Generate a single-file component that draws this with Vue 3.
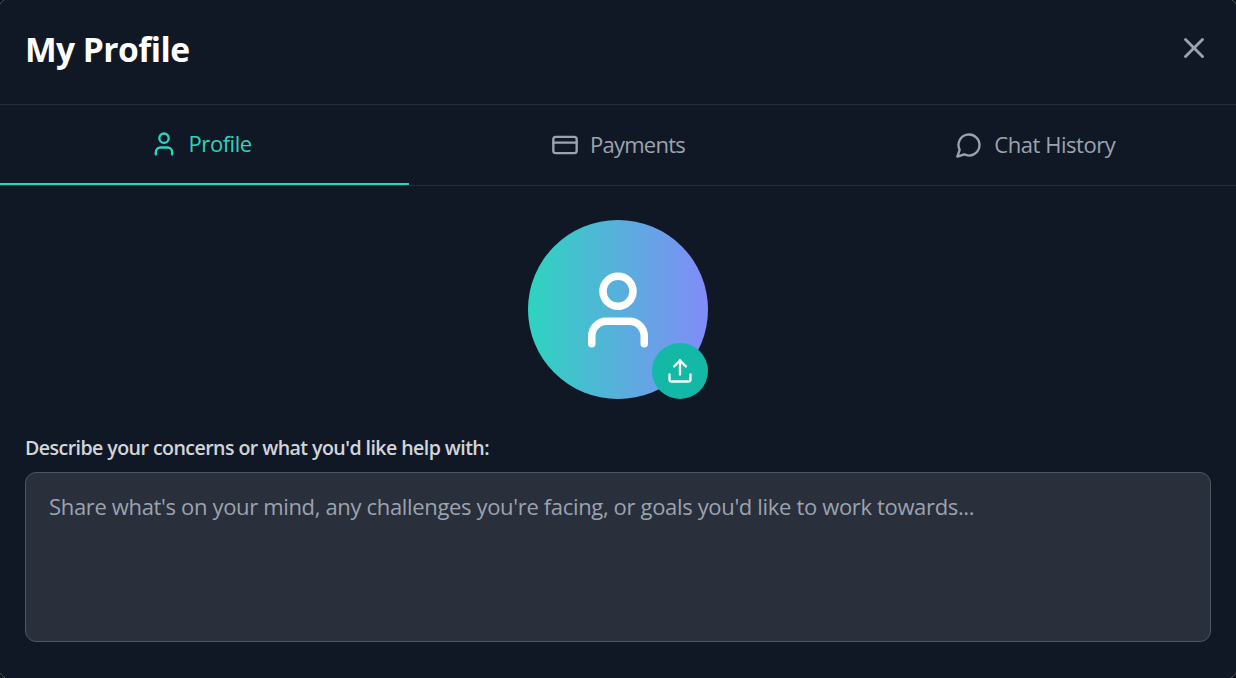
<template>
  <div class="modal">
    <header class="modal-header">
      <h2 class="modal-title">My Profile</h2>
      <button class="close-button" type="button" aria-label="Close">
        <svg class="icon-close" viewBox="0 0 24 24">
          <path d="M18 6 6 18" />
          <path d="m6 6 12 12" />
        </svg>
      </button>
    </header>

    <nav class="tabs">
      <button
        v-for="tab in tabs"
        :key="tab.id"
        type="button"
        class="tab"
        :class="[`tab-${tab.id}`, { active: activeTab === tab.id }]"
        @click="activeTab = tab.id"
      >
        <svg class="icon-tab" viewBox="0 0 24 24">
          <path v-for="d in tab.paths" :key="d" :d="d" />
        </svg>
        <span class="tab-label">{{ tab.label }}</span>
      </button>
    </nav>

    <main class="modal-body">
      <div class="avatar">
        <svg class="icon-avatar" viewBox="0 0 24 24">
          <path v-for="d in userPaths" :key="d" :d="d" />
        </svg>
        <!-- Upload badge over the avatar -->
        <button class="upload-button" type="button" aria-label="Upload">
          <svg class="icon-upload" viewBox="0 0 24 24">
            <path d="M21 15v4a2 2 0 0 1-2 2H5a2 2 0 0 1-2-2v-4" />
            <path d="m17 8-5-5-5 5" />
            <path d="M12 3v12" />
          </svg>
        </button>
      </div>

      <label class="field-label" for="concerns">Describe your concerns or what you'd like help with:</label>
      <textarea
        id="concerns"
        v-model="concerns"
        class="field"
        placeholder="Share what's on your mind, any challenges you're facing, or goals you'd like to work towards..."
      ></textarea>
    </main>
  </div>
</template>

<script setup>
import { ref } from 'vue';

const userPaths = [
  'M19 21v-2a4 4 0 0 0-4-4H9a4 4 0 0 0-4 4v2',
  'M12 3a4 4 0 1 0 0 8a4 4 0 1 0 0-8z'
];

const tabs = [
  { id: 'profile', label: 'Profile', paths: userPaths },
  {
    id: 'payments',
    label: 'Payments',
    paths: [
      'M4 5h16a2 2 0 0 1 2 2v10a2 2 0 0 1-2 2H4a2 2 0 0 1-2-2V7a2 2 0 0 1 2-2z',
      'M2 10h20'
    ]
  },
  {
    id: 'history',
    label: 'Chat History',
    paths: ['M7.9 20A9 9 0 1 0 4 16.1L2 22Z']
  }
];

const activeTab = ref('profile');
const concerns = ref('');
</script>

<style>
body {
  background: #0b1018;
  overflow: hidden;
}
</style>

<style scoped>
.modal {
  box-sizing: border-box;
  width: 1246px;
  height: 687px;
  margin: -5px -5px -4px;
  padding: 4px;
  display: flex;
  flex-direction: column;
  overflow: hidden;
  border: 1px solid #4b5563;
  border-radius: 22px;
  background: #111825;
  color: #fff;
  font-family: "Open Sans", "Noto Sans", sans-serif;
}

button {
  border: 0;
  padding: 0;
  background: none;
  color: inherit;
  font: inherit;
}

svg {
  flex: none;
  fill: none;
  stroke: currentColor;
  stroke-width: 2;
  stroke-linecap: round;
  stroke-linejoin: round;
}

.modal-header {
  box-sizing: border-box;
  height: 105px;
  flex: none;
  display: flex;
  align-items: flex-start;
  justify-content: space-between;
  padding: 25px 25px 0;
  border-bottom: 1px solid #272e3b;
}

.modal-title {
  margin: 0;
  font-size: 33.6px;
  font-weight: 700;
  line-height: 48px;
  letter-spacing: -0.55px;
}

.close-button {
  display: flex;
  padding-top: 6px;
  color: #9ca3af;
}

.icon-close {
  width: 34px;
  height: 34px;
}

.tabs {
  flex: none;
  height: 80px;
  display: flex;
  margin: 0 -8px;
  border-bottom: 1px solid #272e3b;
}

.tab {
  box-sizing: border-box;
  flex: 1;
  display: flex;
  align-items: center;
  justify-content: center;
  gap: 11px;
  color: #9ca3af;
  font-size: 22px;
  letter-spacing: -0.45px;
}

.tab-payments {
  letter-spacing: -0.75px;
}

.tab.active {
  color: #2dd4bf;
  border-bottom: 2px solid #2dd4bf;
}

.tab-label {
  padding-bottom: 2px;
}

.icon-tab {
  width: 28px;
  height: 28px;
}

.modal-body {
  display: flex;
  flex-direction: column;
  padding: 34px 25px 0;
}

.avatar {
  position: relative;
  align-self: center;
  display: flex;
  align-items: center;
  justify-content: center;
  width: 180px;
  height: 179px;
  border-radius: 50%;
  background: linear-gradient(to right, #2dd4bf, #818cf8);
}

.icon-avatar {
  width: 90px;
  height: 90px;
}

.upload-button {
  position: absolute;
  right: 0;
  bottom: 0;
  display: flex;
  align-items: center;
  justify-content: center;
  width: 56px;
  height: 56px;
  border-radius: 50%;
  background: #14b8a6;
}

.icon-upload {
  width: 28px;
  height: 28px;
}

.field-label {
  margin-top: 35px;
  margin-bottom: 10px;
  color: #d1d5db;
  font-size: 19.6px;
  font-weight: 600;
  line-height: 28px;
  letter-spacing: -0.57px;
}

.field {
  box-sizing: border-box;
  height: 170px;
  padding: 16px 23px;
  border: 1px solid #4b5563;
  border-radius: 11px;
  background: #292f3b;
  color: #fff;
  font-family: inherit;
  font-size: 22px;
  line-height: 34px;
  letter-spacing: -0.34px;
  resize: none;
  outline: none;
}

.field::placeholder {
  color: #9ca3af;
  opacity: 1;
}
</style>
